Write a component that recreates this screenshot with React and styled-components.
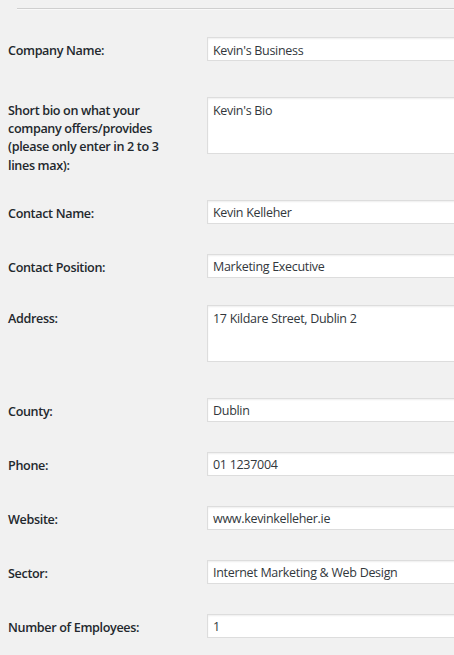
import React from "react";
import styled, { createGlobalStyle } from "styled-components";

const GlobalStyle = createGlobalStyle`
  body {
    margin: 0;
    background: #f1f1f1;
    overflow: hidden;
    font-family: "Open Sans", "Noto Sans", sans-serif;
    color: #23282d;
  }
`;

const Page = styled.div`
  padding: 8px 0 0 8px;
`;

const Divider = styled.hr`
  margin: 0 0 0 9px;
  border: 0;
  border-top: 1px solid #cfcfcf;
  border-bottom: 1px solid #f9f9f9;
`;

const Row = styled.div`
  display: grid;
  grid-template-columns: 199px 1fr;
  align-items: start;
  padding: ${({ $top }) => $top}px 0 ${({ $bottom }) => $bottom}px;
`;

const Label = styled.label`
  display: block;
  width: 168px;
  padding-top: 5px;
  font-size: 12.6px;
  letter-spacing: -0.35px;
  font-weight: 600;
  line-height: 18.2px;
`;

const TextInput = styled.input`
  box-sizing: border-box;
  width: 350px;
  height: 24px;
  margin: 0;
  padding: 2px 5px 0 5px;
  border: 1px solid #ddd;
  box-shadow: inset 0 1px 2px rgba(0, 0, 0, 0.07);
  background: #fff;
  color: #32373c;
  font-family: inherit;
  font-size: 12.5px;
  letter-spacing: -0.3px;
  outline: none;
`;

const TextArea = styled.textarea`
  display: block;
  box-sizing: border-box;
  width: 350px;
  height: 57px;
  margin: 0;
  padding: 4px 5px;
  border: 1px solid #ddd;
  box-shadow: inset 0 1px 2px rgba(0, 0, 0, 0.07);
  background: #fff;
  color: #32373c;
  font-family: inherit;
  font-size: 12.5px;
  letter-spacing: -0.3px;
  line-height: 18px;
  resize: none;
  outline: none;
`;

const fields = [
  { label: "Company Name:", value: "Kevin's Business", top: 27, bottom: 21 },
  {
    label: "Short bio on what your company offers/provides (please only enter in 2 to 3 lines max):",
    value: "Kevin's Bio",
    multi: true,
    top: 15,
    bottom: 10,
  },
  { label: "Contact Name:", value: "Kevin Kelleher", top: 15, bottom: 15 },
  { label: "Contact Position:", value: "Marketing Executive", top: 15, bottom: 12 },
  { label: "Address:", value: "17 Kildare Street, Dublin 2", multi: true, top: 15, bottom: 21 },
  { label: "County:", value: "Dublin", top: 15, bottom: 15 },
  { label: "Phone:", value: "01 1237004", top: 15, bottom: 15 },
  { label: "Website:", value: "www.kevinkelleher.ie", top: 15, bottom: 15 },
  { label: "Sector:", value: "Internet Marketing & Web Design", top: 15, bottom: 15 },
  { label: "Number of Employees:", value: "1", top: 15, bottom: 15 },
];

const App = () => {
  return (
    <Page>
      <GlobalStyle />
      <Divider />
      {fields.map((f, i) => (
        <Row key={i} $top={f.top} $bottom={f.bottom}>
          <Label htmlFor={"field" + i}>{f.label}</Label>
          {f.multi ? (
            <TextArea id={"field" + i} defaultValue={f.value} />
          ) : (
            <TextInput id={"field" + i} type="text" defaultValue={f.value} />
          )}
        </Row>
      ))}
    </Page>
  );
};

export default App;
